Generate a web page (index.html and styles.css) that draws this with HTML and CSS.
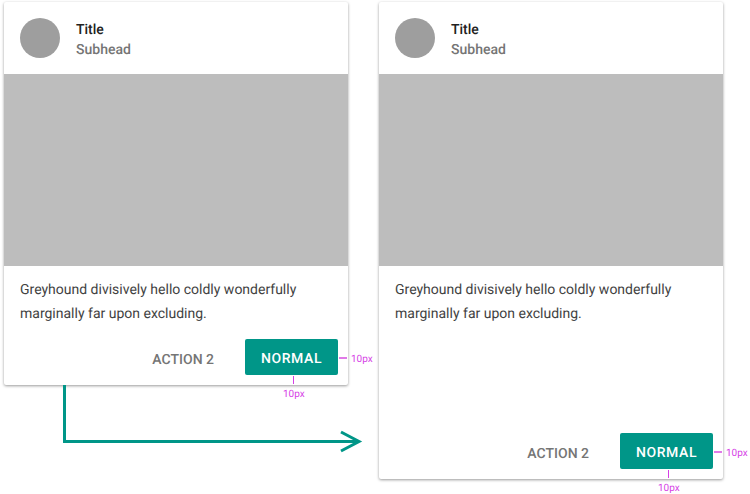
FILE: index.html
```html
<!DOCTYPE html>
<html>
<head>
    <title>Card Actions</title>
    <link rel="stylesheet" href="styles.css">
</head>
<body>
    <div class="stage">
        <div class="card card-short">
            <div class="card-header">
                <div class="avatar"></div>
                <div class="card-heading">
                    <div class="title">Title</div>
                    <div class="subhead">Subhead</div>
                </div>
            </div>
            <div class="media"></div>
            <p class="card-text">Greyhound divisively hello coldly wonderfully marginally far upon excluding.</p>
            <div class="card-actions">
                <span class="action">ACTION 2</span>
                <span class="button">NORMAL</span>
            </div>
            <div class="mark-right"><span class="tick-h"></span>10px</div>
            <div class="mark-bottom"><span class="tick-v"></span>10px</div>
        </div>

        <div class="card card-tall">
            <div class="card-header">
                <div class="avatar"></div>
                <div class="card-heading">
                    <div class="title">Title</div>
                    <div class="subhead">Subhead</div>
                </div>
            </div>
            <div class="media"></div>
            <p class="card-text">Greyhound divisively hello coldly wonderfully marginally far upon excluding.</p>
            <div class="card-actions">
                <span class="action">ACTION 2</span>
                <span class="button">NORMAL</span>
            </div>
            <div class="mark-right"><span class="tick-h"></span>10px</div>
            <div class="mark-bottom"><span class="tick-v"></span>10px</div>
        </div>

        <svg class="arrow" width="310" height="70" viewBox="0 0 310 70">
            <path d="M2.5 0V56.5H297" fill="none" stroke="#009688" stroke-width="3"/>
            <path d="M279 47L297 56.5L279 66" fill="none" stroke="#009688" stroke-width="3"/>
        </svg>
    </div>
</body>
</html>
```

FILE: styles.css
```css
html, body {
    margin: 0;
    padding: 0;
}

body {
    width: 750px;
    height: 494px;
    overflow: hidden;
    background-color: white;
    font-family: Roboto, Arial, sans-serif;
    text-rendering: geometricPrecision;
}

.stage {
    position: relative;
    display: flex;
    align-items: flex-start;
    gap: 31px;
    padding: 2px 0 0 4px;
}

.card {
    position: relative;
    display: flex;
    flex-direction: column;
    width: 344px;
    background-color: white;
    border-radius: 2px;
    box-shadow: 0 1px 3px rgba(0,0,0,0.4);
}

.card-short {
    height: 383px;
}

.card-tall {
    height: 477px;
}

.card-header {
    display: flex;
    align-items: center;
    gap: 16px;
    height: 72px;
    padding-left: 16px;
}

.card-heading {
    padding-top: 4px;
}

.avatar {
    width: 40px;
    height: 40px;
    border-radius: 50%;
    background-color: #9e9e9e;
}

.title {
    font-size: 14px;
    font-weight: 500;
    line-height: 20px;
    color: #212121;
}

.subhead {
    font-size: 14px;
    font-weight: 500;
    line-height: 20px;
    color: #757575;
}

.media {
    height: 192px;
    background-color: #bdbdbd;
}

.card-text {
    margin: 0;
    padding: 12px 16px 0;
    font-size: 14px;
    line-height: 24px;
    color: #424242;
}

.card-actions {
    display: flex;
    align-items: center;
    justify-content: flex-end;
    gap: 31px;
    margin-top: auto;
    padding: 0 10px 10px 0;
}

.action {
    padding-top: 6px;
    font-size: 14px;
    font-weight: 500;
    color: #757575;
}

.button {
    width: 93px;
    height: 36px;
    line-height: 40px;
    text-align: center;
    border-radius: 2px;
    background-color: #009688;
    color: white;
    font-size: 14px;
    font-weight: 500;
    letter-spacing: 0.6px;
}

.mark-right,
.mark-bottom {
    position: absolute;
    font-size: 10px;
    line-height: 12px;
    color: #d63fe6;
}

.mark-right {
    display: flex;
    align-items: flex-start;
    gap: 4px;
    top: 352px;
    left: 335px;
}

.card-tall .mark-right {
    top: 446px;
}

.mark-bottom {
    display: flex;
    flex-direction: column;
    align-items: center;
    gap: 5px;
    top: 374px;
    left: 279px;
}

.card-tall .mark-bottom {
    top: 468px;
}

.tick-h {
    width: 8px;
    height: 2px;
    margin-top: 3px;
    background-color: #e07ae8;
}

.tick-v {
    width: 1px;
    height: 8px;
    background-color: #d63fe6;
}

.arrow {
    position: absolute;
    left: 62px;
    top: 385px;
}
```
